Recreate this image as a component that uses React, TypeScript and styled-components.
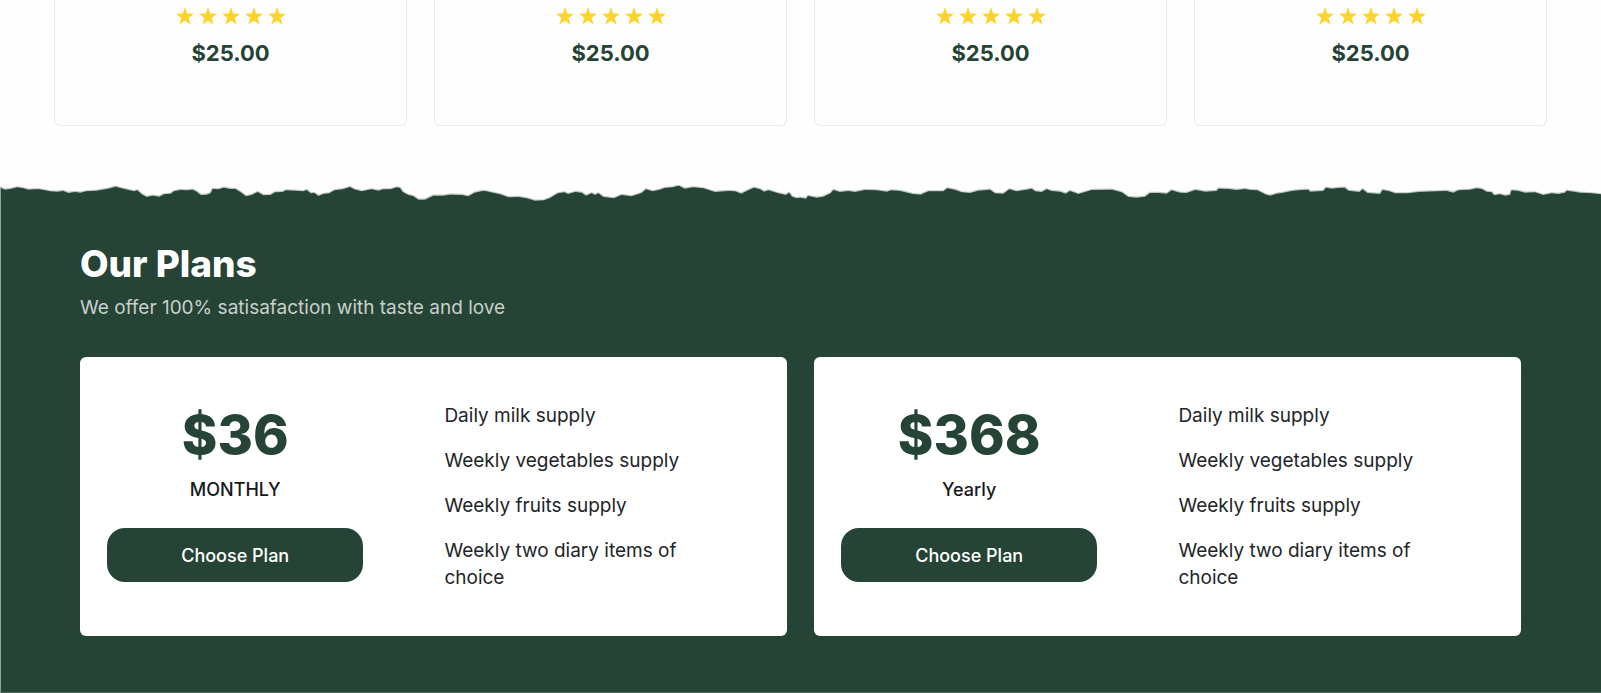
import React from "react";
import styled, { createGlobalStyle } from "styled-components";

const green = "#254436";
const edgeLine = "#91a39a";

const GlobalStyle = createGlobalStyle`
  *, *::before, *::after { box-sizing: border-box; }
  body {
    margin: 0;
    background: #fefefe;
    color: #212529;
    font-family: Inter, "Open Sans", sans-serif;
    font-size: 19px;
    line-height: 27px;
  }
`;

const Products = styled.section`
  display: grid;
  grid-template-columns: repeat(4, 1fr);
  gap: 27px;
  padding: 0 54px 59px;
`;

const ProductCard = styled.article`
  display: flex;
  flex-direction: column;
  align-items: center;
  gap: 15px;
  padding: 7px 0 58px;
  border: 1px solid #e8ebea;
  border-top: 0;
  border-radius: 0 0 6px 6px;
`;

const Stars = styled.div`
  display: flex;
  gap: 5px;
`;

const Star = styled.svg`
  display: block;
  width: 18px;
  height: 18px;
  fill: #fdd42b;
`;

const ProductPrice = styled.p`
  margin: 0;
  color: ${green};
  font-size: 22px;
  font-weight: 700;
`;

const TornEdge = styled.svg`
  display: block;
  width: 100%;
  height: 20px;
  fill: ${green};
`;

const Plans = styled.section`
  padding: 39px 80px 56px 79px;
  background: ${green};
  border-left: 1px solid ${edgeLine};
  border-bottom: 1px solid #51695e;
`;

const Heading = styled.h2`
  margin: 0;
  color: #fff;
  font-size: 37px;
  font-weight: 800;
  line-height: 40px;
`;

const Subtitle = styled.p`
  margin: 10px 0 36px;
  color: #c8d0cc;
`;

const PlanGrid = styled.div`
  display: grid;
  grid-template-columns: 1fr 1fr;
  gap: 27px;
`;

const PlanCard = styled.article`
  display: grid;
  grid-template-columns: 13fr 16fr;
  column-gap: 81px;
  align-items: start;
  padding: 45px 27px;
  background: #fff;
  border-radius: 6px;
  box-shadow: 0 0 27px rgba(255, 255, 255, 0.02);
`;

const Offer = styled.div`
  display: flex;
  flex-direction: column;
  align-items: stretch;
  text-align: center;
`;

const Amount = styled.h3`
  margin: 0;
  color: ${green};
  font-size: 54px;
  font-weight: 800;
  line-height: 66px;
`;

const Period = styled.p`
  margin: 8px 0 25px;
  color: #16191c;
  font-size: 18px;
  font-weight: 500;
`;

const ChooseButton = styled.button`
  height: 54px;
  border: 0;
  border-radius: 18px;
  background: ${green};
  color: #fff;
  font: 500 18px Inter, "Open Sans", sans-serif;
  cursor: pointer;
`;

const Features = styled.ul`
  display: flex;
  flex-direction: column;
  gap: 18px;
  margin: 0;
  padding: 0 54px 0 0;
  list-style: none;
`;

const EDGE =
  "0,38 15,44 35,41 52,37 70,40 85,44 104,43 118,43 135,46 150,49 172,50 190,48 205,54 225,51 242,53 258,49 290,47 325,41 347,35 364,40 382,44 402,49 412,46 425,58 440,66 458,62 478,65 492,58 512,56 522,49 540,45 560,46 578,44 590,50 602,60 620,59 632,55 638,42 655,43 672,38 690,42 706,42 722,52 738,64 755,60 773,51 790,61 812,60 825,52 848,51 858,46 885,47 910,49 920,45 932,55 943,54 955,63 970,57 988,55 1004,46 1028,43 1050,36 1062,43 1085,49 1115,43 1135,47 1150,43 1172,43 1190,37 1200,39 " +
  "1208,51 1225,60 1240,64 1255,74 1275,74 1300,62 1330,62 1350,59 1385,60 1405,64 1424,53 1448,48 1460,49 1472,52 1500,58 1525,67 1555,66 1580,70 1605,77 1632,76 1650,69 1674,55 1693,52 1704,57 1725,51 1745,53 1758,62 1775,55 1785,60 1795,55 1810,66 1842,70 1864,60 1895,64 1925,54 1938,43 1958,49 1980,44 1994,39 2018,37 2036,32 2054,41 2080,37 2110,40 2145,51 2185,48 2205,49 2224,56 2240,48 2262,38 2280,43 2292,50 2305,46 2335,55 2358,60 2367,53 2376,65 2390,70 " +
  "2400,68 2418,71 2424,63 2450,68 2470,65 2492,55 2500,45 2520,51 2545,48 2565,51 2595,45 2630,46 2660,50 2675,46 2700,48 2738,57 2762,59 2785,49 2830,49 2842,40 2864,44 2885,52 2910,54 2935,47 2970,44 2985,55 3010,56 3028,43 3050,49 3080,44 3095,41 3105,49 3125,51 3140,43 3155,48 3180,50 3197,56 3210,48 3235,57 3275,45 3336,44 3365,52 3385,66 3410,68 3435,65 3450,54 3475,54 3500,56 3515,46 3540,53 3560,54 3585,45 " +
  "3600,47 3615,50 3650,48 3655,41 3685,42 3710,45 3735,42 3750,45 3772,46 3795,58 3810,62 3830,56 3850,53 3875,48 3905,45 3925,44 3930,50 3970,48 3978,38 3996,41 4015,39 4034,38 4045,47 4078,51 4088,43 4102,54 4140,57 4148,45 4168,49 4185,55 4224,55 4255,51 4310,49 4340,48 4360,53 4375,46 4410,44 4430,40 4445,42 4460,50 4475,52 4482,61 4500,58 4515,62 4530,60 4535,46 4555,48 4575,53 4605,52 4630,60 4655,55 4675,57 4695,53 4700,47 4722,50 4740,53 4775,55 4803,58";

const plans = [
  { amount: "$36", period: "MONTHLY" },
  { amount: "$368", period: "Yearly" },
];

const features = [
  "Daily milk supply",
  "Weekly vegetables supply",
  "Weekly fruits supply",
  "Weekly two diary items of choice",
];

function Rating() {
  return (
    <Stars role="img" aria-label="5 out of 5 stars">
      {[0, 1, 2, 3, 4].map((n) => (
        <Star key={n} viewBox="0 0 18 18">
          <path d="M9 0 11.2 6.5 18 6.7 12.6 10.9 14.6 17.6 9 13.7 3.4 17.6 5.4 10.9 0 6.7 6.8 6.5Z" />
        </Star>
      ))}
    </Stars>
  );
}

export default function App() {
  return (
    <>
      <GlobalStyle />
      <main>
        <Products>
          {[0, 1, 2, 3].map((n) => (
            <ProductCard key={n}>
              <Rating />
              <ProductPrice>$25.00</ProductPrice>
            </ProductCard>
          ))}
        </Products>
        <TornEdge viewBox="0 30 4803 60" preserveAspectRatio="none" aria-hidden="true">
          <polygon
            points={`0,90 ${EDGE} 4803,90`}
            stroke={green}
            strokeWidth="7"
            strokeOpacity="0.3"
            strokeLinejoin="round"
          />
          <rect x="0" y="39" width="3" height="51" fill={edgeLine} />
        </TornEdge>
        <Plans>
          <Heading>Our Plans</Heading>
          <Subtitle>We offer 100% satisafaction with taste and love</Subtitle>
          <PlanGrid>
            {plans.map((plan) => (
              <PlanCard key={plan.period}>
                <Offer>
                  <Amount>{plan.amount}</Amount>
                  <Period>{plan.period}</Period>
                  <ChooseButton type="button">Choose Plan</ChooseButton>
                </Offer>
                <Features>
                  {features.map((feature) => (
                    <li key={feature}>{feature}</li>
                  ))}
                </Features>
              </PlanCard>
            ))}
          </PlanGrid>
        </Plans>
      </main>
    </>
  );
}
